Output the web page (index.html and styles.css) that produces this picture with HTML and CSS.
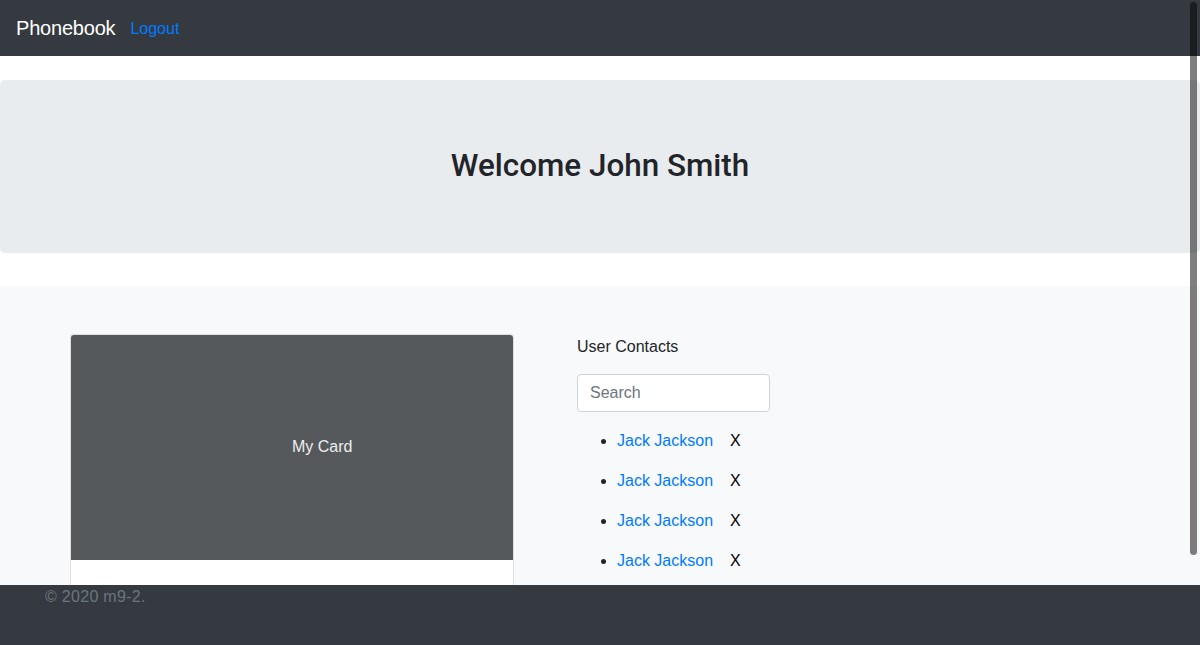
FILE: index.html
```html
<!DOCTYPE html>
<html lang="en">
<head>
<meta charset="utf-8">
<title>Phonebook</title>
<link rel="stylesheet" href="styles.css">
</head>
<body>
<nav class="navbar">
  <a class="brand" href="#">Phonebook</a>
  <a class="nav-link" href="#">Logout</a>
</nav>
<main class="main">
  <section class="jumbotron">
    <h1 class="welcome">Welcome John Smith</h1>
  </section>
  <section class="album">
    <div class="card">
      <div class="card-img"><span class="card-img-text">My Card</span></div>
      <div class="card-body"></div>
    </div>
    <div class="contacts">
      <p class="contacts-title">User Contacts</p>
      <input class="search" type="text" placeholder="Search">
      <ul class="contact-list">
        <li class="contact"><a class="contact-name" href="#">Jack Jackson</a><span class="remove">X</span></li>
        <li class="contact"><a class="contact-name" href="#">Jack Jackson</a><span class="remove">X</span></li>
        <li class="contact"><a class="contact-name" href="#">Jack Jackson</a><span class="remove">X</span></li>
        <li class="contact"><a class="contact-name" href="#">Jack Jackson</a><span class="remove">X</span></li>
      </ul>
    </div>
  </section>
</main>
<footer class="footer">
  <span class="copyright">© 2020 m9-2.</span>
</footer>
<div class="scroll-thumb"></div>
</body>
</html>
```

FILE: styles.css
```css
* { box-sizing: border-box; }
html, body {
  margin: 0;
  height: 645px;
  overflow: hidden;
}
body {
  font-family: "Liberation Sans", Arial, sans-serif;
  font-size: 16px;
  line-height: 1.5;
  color: #212529;
  background: #fff;
  display: flex;
  flex-direction: column;
}
a { text-decoration: none; }

.navbar {
  height: 56px;
  flex: 0 0 56px;
  background: #343a40;
  display: flex;
  align-items: center;
  padding: 0 16px;
  gap: 15px;
}
.brand {
  color: #fff;
  font-size: 20px;
  line-height: 30px;
  letter-spacing: -0.2px;
}
.nav-link {
  color: #007bff;
  font-size: 16px;
  line-height: 24px;
  margin-top: 1px;
}

.main {
  flex: 1 1 auto;
  overflow: hidden;
  padding-top: 24px;
}
.jumbotron {
  background: #e9ecef;
  border-radius: 5px;
  height: 173px;
  display: flex;
  align-items: center;
  justify-content: center;
  margin-bottom: 33px;
}
.welcome {
  margin: 0 0 2px;
  font-family: Roboto, "Liberation Sans", Arial, sans-serif;
  font-size: 31.4px;
  font-weight: 500;
  line-height: 1.2;
  color: #212529;
}

.album {
  background: #f8f9fa;
  padding: 48px 0 0 70px;
  display: flex;
  align-items: flex-start;
  gap: 63px;
  min-height: 400px;
}
.card {
  width: 444px;
  border: 1px solid rgba(0,0,0,.125);
  border-radius: 4px;
  background: #fff;
  overflow: hidden;
}
.card-img {
  height: 225px;
  background: #55595c;
  display: flex;
  align-items: center;
  padding-left: 50%;
}
.card-img-text {
  color: #eceeef;
  font-size: 16px;
  margin-top: -2px;
}
.card-body {
  height: 120px;
}

.contacts {
  width: 200px;
  padding-top: 1px;
}
.contacts-title {
  margin: 0 0 15px;
  line-height: 24px;
}
.search {
  display: block;
  width: 193px;
  height: 38px;
  padding: 6px 12px;
  font-family: inherit;
  font-size: 16px;
  color: #495057;
  background: #fff;
  border: 1px solid #ced4da;
  border-radius: 4px;
  outline: none;
}
.search::placeholder { color: #6c757d; }
.contact-list {
  margin: 9px 0 0;
  padding-left: 40px;
}
.contact {
  height: 40px;
  line-height: 24px;
  padding-top: 8px;
}
.contact-name { color: #007bff; }
.remove {
  margin-left: 17px;
  color: #000;
}

.footer {
  flex: 0 0 60px;
  height: 60px;
  background: #343a40;
  padding: 0 45px;
}
.copyright {
  color: #6c757d;
  line-height: 24px;
  letter-spacing: 0.3px;
}

.scroll-thumb {
  position: fixed;
  top: 2px;
  right: 3px;
  width: 7px;
  height: 553px;
  border-radius: 4px;
  background: rgba(0,0,0,.5);
}
```
